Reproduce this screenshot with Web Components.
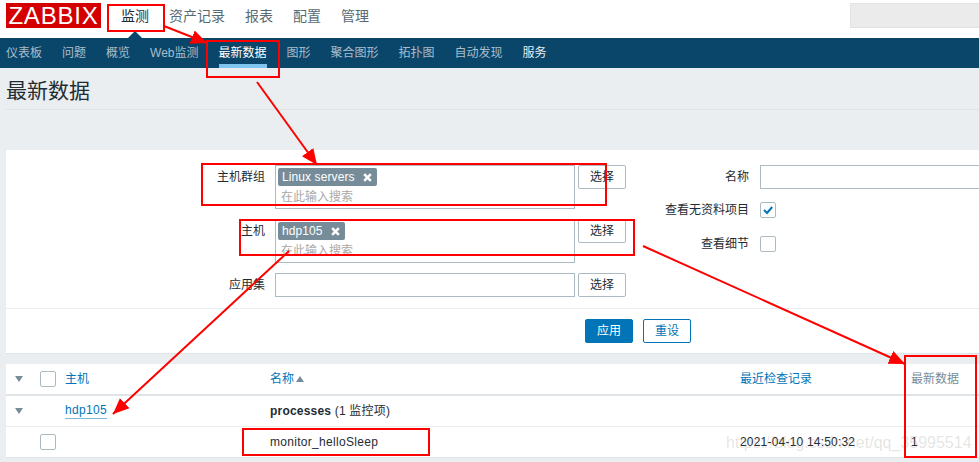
<!DOCTYPE html>
<html lang="zh">
<head>
<meta charset="utf-8">
<title>最新数据</title>
<style>
html, body { margin: 0; height: 100%; overflow: hidden; }
body {
    position: relative;
    background: #ebeef0;
    color: #1f2c33;
    font: 12px/14px "Liberation Sans", "Noto Sans CJK SC", sans-serif;
}
</style>
</head>
<body>
<zbx-topnav></zbx-topnav>
<zbx-subnav></zbx-subnav>
<zbx-title>最新数据</zbx-title>
<zbx-filter></zbx-filter>
<zbx-table></zbx-table>
<zbx-annotations></zbx-annotations>

<script>
// 顶部导航
class ZbxTopnav extends HTMLElement {
    constructor() {
        super()
        this.attachShadow({ mode: 'open' })
        const items = ['监测', '资产记录', '报表', '配置', '管理']
        this.shadowRoot.innerHTML = `
        <style>
        :host { display: flex; align-items: flex-start; height: 38px; background: #fff; position: relative; }
        .logo {
            margin: 3px 0 0 6px;
            width: 95px;
            height: 25px;
            background: #d40000;
            color: #fff;
            font-size: 24px;
            line-height: 26px;
            letter-spacing: 0.8px;
            text-align: center;
            overflow: hidden;
        }
        nav { display: flex; margin-left: 10px; }
        a { padding: 8px 10px 0; font-size: 14px; line-height: 16px; color: #5a6a73; }
        a.on { color: #1f2c33; position: relative; }
        a.on::after {
            content: '';
            position: absolute;
            left: 17px;
            top: 31px;
            border: 7px solid transparent;
            border-top: 0;
            border-bottom-color: #0a466a;
        }
        .search { margin: 3px 0 0 auto; width: 129px; height: 25px; background: #ebebeb; border: 1px solid #e3e3e3; border-right: 0; box-sizing: border-box; }
        </style>
        <div class="logo">ZABBIX</div>
        <nav>${items.map((t, i) => `<a class="${i ? '' : 'on'}">${t}</a>`).join('')}</nav>
        <div class="search"></div>
        `
    }
}

// 二级导航
class ZbxSubnav extends HTMLElement {
    constructor() {
        super()
        this.attachShadow({ mode: 'open' })
        const items = ['仪表板', '问题', '概览', 'Web监测', '最新数据', '图形', '聚合图形', '拓扑图', '自动发现', '服务']
        this.shadowRoot.innerHTML = `
        <style>
        :host { display: flex; height: 30px; background: #0a466a; overflow: hidden; }
        a { margin-left: 6px; margin-right: 14px; padding-top: 8px; line-height: 14px; color: #a9bdca; height: 30px; box-sizing: border-box; }
        a.on { color: #fff; border-bottom: 4px solid #7fc4ee; }
        a.hi { color: #e8eef2; }
        </style>
        ${items.map((t) => `<a class="${t === '最新数据' ? 'on' : t === '服务' ? 'hi' : ''}">${t}</a>`).join('')}
        `
    }
}

// 页面标题
class ZbxTitle extends HTMLElement {
    constructor() {
        super()
        this.attachShadow({ mode: 'open' })
        this.shadowRoot.innerHTML = `
        <style>
        :host {
            display: block;
            margin: 0 0 0 6px;
            height: 41px;
            border-bottom: 1px solid #dfe4e7;
            font-size: 21px;
            line-height: 46px;
        }
        </style>
        <slot></slot>
        `
    }
}

class ZbxButton extends HTMLElement {
    constructor() {
        super()
        this.attachShadow({ mode: 'open' })
        this.shadowRoot.innerHTML = `
        <style>
        :host {
            display: block;
            box-sizing: border-box;
            width: 48px;
            height: 24px;
            border: 1px solid #acbbc2;
            border-radius: 2px;
            background: #fff;
            text-align: center;
            line-height: 22px;
            color: #1f2c33;
        }
        :host([kind="primary"]) { background: #0275b8; border-color: #0275b8; color: #fff; }
        :host([kind="outline"]) { border-color: #0275b8; color: #0275b8; }
        </style>
        <slot></slot>
        `
    }
}

// 多选框
class ZbxMultiselect extends HTMLElement {
    constructor() {
        super()
        this.attachShadow({ mode: 'open' })
        const tag = this.getAttribute('tag')
        this.shadowRoot.innerHTML = `
        <style>
        :host {
            display: block;
            box-sizing: border-box;
            width: 300px;
            height: 44px;
            border: 1px solid #acbbc2;
            background: #fff;
            padding: 2px;
        }
        .tag {
            display: inline-flex;
            align-items: center;
            height: 18px;
            padding: 0 5px 0 4px;
            gap: 8px;
            background: #768d99;
            color: #fff;
            border-radius: 2px;
            letter-spacing: 0.1px;
        }
        .ph { margin: 4px 0 0 3px; line-height: 14px; color: #a9a9a9; }
        svg { display: block; }
        </style>
        <span class="tag">${tag}<svg width="9" height="9" viewBox="0 0 9 9"><path d="M1.2 1.2 7.8 7.8M7.8 1.2 1.2 7.8" stroke="#fff" stroke-width="2.6"/></svg></span>
        <div class="ph">在此输入搜索</div>
        `
    }
}

class ZbxCheckbox extends HTMLElement {
    constructor() {
        super()
        this.attachShadow({ mode: 'open' })
        const checked = this.hasAttribute('checked')
        this.shadowRoot.innerHTML = `
        <style>
        :host {
            display: block;
            box-sizing: border-box;
            width: 16px;
            height: 16px;
            border: 1px solid #acbbc2;
            border-radius: 2px;
            background: #fff;
        }
        svg { display: block; margin: 2px 0 0 2px; }
        </style>
        ${checked ? '<svg width="10" height="10" viewBox="0 0 10 10"><path d="M1 5 4 8 9.2 2" fill="none" stroke="#0275b8" stroke-width="2"/></svg>' : ''}
        `
    }
}

// 过滤器
class ZbxFilter extends HTMLElement {
    constructor() {
        super()
        this.attachShadow({ mode: 'open' })
        this.shadowRoot.innerHTML = `
        <style>
        :host {
            display: block;
            box-sizing: border-box;
            height: 204px;
            margin: 40px 0 0 6px;
            padding-top: 15px;
            background: #fff;
            border-bottom: 1px solid #dfe4e7;
        }
        .cols { display: flex; height: 133px; }
        .left {
            flex: none;
            width: 620px;
            display: grid;
            grid-template-columns: 269px 300px 48px;
            grid-template-rows: 44px 44px 24px;
            row-gap: 10px;
            align-content: start;
        }
        .left label { text-align: right; padding-right: 10px; line-height: 24px; }
        .left zbx-button { margin-left: 3px; }
        .right {
            flex: 1;
            display: grid;
            grid-template-columns: 123px 1fr;
            grid-template-rows: 24px 24px 26px;
            row-gap: 9px;
            column-gap: 11px;
            align-content: start;
        }
        .right label { text-align: right; line-height: 24px; }
        .right label:nth-last-child(2) { line-height: 26px; }
        .right .cb { display: flex; align-items: center; }
        .name { box-sizing: border-box; border: 1px solid #acbbc2; border-right: 0; background: #fff; }
        .third { box-sizing: border-box; border: 1px solid #acbbc2; }
        .foot { margin-top: 10px; border-top: 1px solid #ebeef0; padding: 10px 0 0 579px; display: flex; gap: 10px; }
        </style>
        <div class="cols">
            <div class="left">
                <label>主机群组</label><zbx-multiselect tag="Linux servers"></zbx-multiselect><zbx-button>选择</zbx-button>
                <label>主机</label><zbx-multiselect tag="hdp105"></zbx-multiselect><zbx-button>选择</zbx-button>
                <label>应用集</label><div class="third"></div><zbx-button>选择</zbx-button>
            </div>
            <div class="right">
                <label>名称</label><div class="name"></div>
                <label>查看无资料项目</label><div class="cb"><zbx-checkbox checked></zbx-checkbox></div>
                <label>查看细节</label><div class="cb"><zbx-checkbox></zbx-checkbox></div>
            </div>
        </div>
        <div class="foot">
            <zbx-button kind="primary">应用</zbx-button>
            <zbx-button kind="outline">重设</zbx-button>
        </div>
        `
    }
}

// 数据表
class ZbxTable extends HTMLElement {
    constructor() {
        super()
        this.attachShadow({ mode: 'open' })
        const tri = '<svg width="8" height="6" viewBox="0 0 8 6"><path d="M0 0H8L4 6Z" fill="#768d99"/></svg>'
        this.shadowRoot.innerHTML = `
        <style>
        :host {
            display: block;
            box-sizing: border-box;
            margin: 10px 0 0 6px;
            background: #fff;
            border-bottom: 1px solid #dfe4e7;
        }
        .row { display: grid; grid-template-columns: 34px 25px 205px 470px 171px 1fr; align-items: center; }
        .head { height: 32px; border-bottom: 2px solid #dfe4e7; box-sizing: border-box; }
        .group { height: 31px; border-bottom: 1px solid #ebeef0; box-sizing: border-box; }
        .item { height: 30px; letter-spacing: 0.3px; }
        .time { letter-spacing: 0.2px; }
        .tri { padding-left: 9px; }
        .tri svg { display: block; }
        .lnk { color: #0275b8; }
        .mute { color: #768d99; }
        .host { justify-self: start; color: #0275b8; border-bottom: 1px solid #7fb8da; line-height: 15px; letter-spacing: 0.35px; }
        .proc { letter-spacing: 0.2px; }
        .sort { display: inline-block; margin-left: 2px; vertical-align: 1px; border: 4px solid transparent; border-top: 0; border-bottom: 6px solid #768d99; }
        </style>
        <div class="row head">
            <div class="tri">${tri}</div><zbx-checkbox></zbx-checkbox>
            <div class="lnk">主机</div>
            <div class="lnk">名称<span class="sort"></span></div>
            <div class="lnk">最近检查记录</div>
            <div class="mute">最新数据</div>
        </div>
        <div class="row group">
            <div class="tri">${tri}</div><div></div>
            <div class="host">hdp105</div>
            <div class="proc"><b>processes</b> (1 监控项)</div><div></div><div></div>
        </div>
        <div class="row item">
            <div></div><zbx-checkbox></zbx-checkbox><div></div>
            <div>monitor_helloSleep</div>
            <div class="time">2021-04-10 14:50:32</div>
            <div>1</div>
        </div>
        `
    }
}

// 截图上的红色标注
class ZbxAnnotations extends HTMLElement {
    constructor() {
        super()
        this.attachShadow({ mode: 'open' })
        const rects = [[108, 5, 56, 26], [207, 41, 72, 36], [202, 164, 404, 41], [240, 220, 394, 35], [243, 429, 186, 26], [905, 356, 71, 101]]
        const lines = [[164, 26, 207, 43], [257, 82, 317, 165], [289, 251, 113, 414], [643, 246, 905, 364]]
        this.shadowRoot.innerHTML = `
        <style>
        :host { position: absolute; inset: 0; pointer-events: none; }
        svg { position: absolute; left: 0; top: 0; }
        .mark {
            position: absolute;
            left: 726px;
            top: 434px;
            font-size: 16px;
            line-height: 18px;
            color: rgba(120, 120, 120, 0.2);
            white-space: nowrap;
        }
        </style>
        <div class="mark">https://blog.csdn.net/qq_35995514</div>
        <svg width="979" height="462" viewBox="0 0 979 462">
            <defs>
                <marker id="head" markerUnits="userSpaceOnUse" markerWidth="16" markerHeight="16" refX="16" refY="8" orient="auto">
                    <path d="M0 1 16 8 0 15Z" fill="#f00"/>
                </marker>
            </defs>
            ${rects.map((r) => `<rect x="${r[0]}" y="${r[1]}" width="${r[2]}" height="${r[3]}" fill="none" stroke="#f00" stroke-width="2"/>`).join('')}
            ${lines.map((l) => `<line x1="${l[0]}" y1="${l[1]}" x2="${l[2]}" y2="${l[3]}" stroke="#f00" stroke-width="2" marker-end="url(#head)"/>`).join('')}
        </svg>
        `
    }
}

customElements.define('zbx-button', ZbxButton)
customElements.define('zbx-checkbox', ZbxCheckbox)
customElements.define('zbx-multiselect', ZbxMultiselect)
customElements.define('zbx-topnav', ZbxTopnav)
customElements.define('zbx-subnav', ZbxSubnav)
customElements.define('zbx-title', ZbxTitle)
customElements.define('zbx-filter', ZbxFilter)
customElements.define('zbx-table', ZbxTable)
customElements.define('zbx-annotations', ZbxAnnotations)
</script>
</body>
</html>
